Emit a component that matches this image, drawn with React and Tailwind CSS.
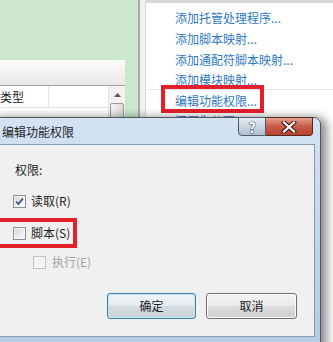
function CheckBox({ checked = false, disabled = false }) {
  return (
    <div
      className={
        "w-[13px] h-[13px] shrink-0 border flex items-center justify-center " +
        (disabled
          ? "border-[#c2c2c2] bg-[#f4f4f4]"
          : "border-[#8e8f8f] bg-gradient-to-br from-[#d6d6d6] to-[#fbfbfb] shadow-[inset_0_0_0_1px_#f4f4f4]")
      }
    >
      {checked && (
        <svg width="11" height="11" viewBox="0 0 11 11">
          <path d="M2.2 5.6 L4.5 8 L8.8 2.6" fill="none" stroke="#3b5592" strokeWidth="1.8" />
        </svg>
      )}
    </div>
  );
}

export default function App() {
  return (
    <div className="relative w-[333px] h-[342px] overflow-hidden bg-white font-['Noto_Sans_CJK_SC',sans-serif] text-[12px] leading-none text-[#1e1e1e]">
      <div className="flex h-full">
        {/* left green area with list panel */}
        <div className="w-[138px] h-full bg-[#cde8ce] flex flex-col shrink-0">
          <div className="h-[60px] shrink-0" />
          <div className="w-[125px] flex-1 flex flex-col">
            <div className="h-[26px] shrink-0 bg-gradient-to-b from-[#fbfbfb] to-[#e8e8e8] border-b border-[#a3a3a3]" />
            <div className="flex flex-1">
              <div className="w-[108px] bg-white flex flex-col">
                <div className="h-[22px] flex border-b border-[#e2e2e2]">
                  <div className="w-[49px] border-r border-[#e6e6e6] flex items-center overflow-hidden">
                    <span className="leading-[14px]">类型</span>
                  </div>
                  <div className="flex-1" />
                </div>
              </div>
              <div className="w-[17px] bg-[#f2f2f2] border-l border-[#e4e4e4] flex flex-col items-center">
                <div className="h-[17px] flex items-center justify-center">
                  <svg width="7" height="4" viewBox="0 0 7 4">
                    <path d="M0 4 L3.5 0 L7 4 Z" fill="#555" />
                  </svg>
                </div>
                <div className="w-[14px] h-[30px] rounded-[2px] border border-[#9b9b9b] bg-gradient-to-r from-[#f4f4f4] to-[#dcdcdc]" />
              </div>
            </div>
          </div>
        </div>
        <div className="w-[2px] h-full bg-[#a9a9a9] shrink-0" />
        {/* right actions panel */}
        <div className="flex-1 flex h-full">
          <div className="w-[5px] bg-[#f1f1f1]" />
          <div className="w-px bg-[#dcdcdc]" />
          <div className="flex-1 flex flex-col">
            <div className="h-[3px] bg-[#d8d8d8]" />
            <div className="flex flex-col pl-[29px] text-[#2f78c4] leading-[20px]">
              <div className="mt-[5px] h-[20px]">添加托管处理程序...</div>
              <div className="mt-px h-[20px]">添加脚本映射...</div>
              <div className="mt-px h-[20px]">添加通配符脚本映射...</div>
              <div className="h-[19px]">添加模块映射...</div>
            </div>
            <div className="h-px bg-[#e6e6e6]" />
            <div className="flex flex-col pl-[29px] text-[#2f78c4] leading-[20px]">
              <div className="mt-px h-[20px]">编辑功能权限...</div>
              <div className="h-[20px]">还原为父项</div>
            </div>
          </div>
        </div>
      </div>

      {/* red annotation on the action */}
      <div className="absolute left-[161px] top-[85px] w-[103px] h-[28px] border-4 border-[#e4202b]" />

      {/* dialog window */}
      <div className="absolute left-[-8px] top-[117px] w-[329px] h-[240px] rounded-t-[7px] border border-[#4d5662] bg-gradient-to-b from-[#d3e3f3] via-[#c2d6eb] to-[#b2cae3] shadow-[3px_3px_10px_3px_rgba(0,0,0,0.45)] flex flex-col">
        <div className="h-[26px] shrink-0 flex items-start justify-between">
          <span className="pl-[9px] mt-[7px] leading-[14px] text-[#1e1e1e]">编辑功能权限</span>
          <div className="flex -mt-px mr-[7px]">
            <div className="w-[28px] h-[19px] rounded-bl-[4px] border border-[#4f5b68] bg-gradient-to-b from-[#e6edf4] via-[#c9d6e3] to-[#aebfd1] flex items-center justify-center">
              <span className="text-[14px] font-bold leading-none text-white [-webkit-text-stroke:1px_#3a4450] [paint-order:stroke_fill]">?</span>
            </div>
            <div className="w-[47px] h-[19px] rounded-br-[4px] border border-l-0 border-[#5a2620] bg-gradient-to-b from-[#e4a090] via-[#c85a48] to-[#b8412f] flex items-center justify-center">
              <svg width="16" height="12" viewBox="0 0 16 12">
                <path d="M3 1.5 L13 10.5 M13 1.5 L3 10.5" stroke="#3a1a14" strokeWidth="4.2" strokeLinecap="square" />
                <path d="M3 1.5 L13 10.5 M13 1.5 L3 10.5" stroke="#ffffff" strokeWidth="2.2" strokeLinecap="square" />
              </svg>
            </div>
          </div>
        </div>
        <div className="ml-[6px] mr-[5px] h-[193px] shrink-0 border border-[#8599ad] bg-[#f0f0f0] flex flex-col pl-[13px]">
          <div className="mt-[17px] h-[16px] flex items-center pl-[2px]">权限:</div>
          <div className="mt-[15px] h-[16px] flex items-center gap-[5px]">
            <CheckBox checked />
            <span>读取(R)</span>
          </div>
          <div className="mt-[16px] h-[16px] flex items-center gap-[5px]">
            <CheckBox />
            <span>脚本(S)</span>
          </div>
          <div className="mt-[13px] h-[16px] flex items-center gap-[6px] pl-[20px] text-[#a3a3a3]">
            <CheckBox disabled />
            <span>执行(E)</span>
          </div>
          <div className="mt-[23px] flex gap-[10px] pl-[94px]">
            <div className="w-[89px] h-[26px] rounded-[3px] border border-[#3c7fb1] bg-[linear-gradient(to_bottom,#eef3f6_0%,#e6ebee_50%,#d6dde2_51%,#cbd3d9_100%)] shadow-[inset_0_0_0_1px_#c5e4f5] flex items-center justify-center">
              确定
            </div>
            <div className="w-[91px] h-[26px] rounded-[3px] border border-[#707070] bg-[linear-gradient(to_bottom,#f2f2f2_0%,#ebebeb_50%,#dddddd_51%,#cfcfcf_100%)] shadow-[inset_0_0_0_1px_#fcfcfc] flex items-center justify-center">
              取消
            </div>
          </div>
        </div>
      </div>

      {/* red annotation on the checkbox */}
      <div className="absolute left-[-4px] top-[218px] w-[81px] h-[30px] border-4 border-[#e4202b]" />
    </div>
  );
}
